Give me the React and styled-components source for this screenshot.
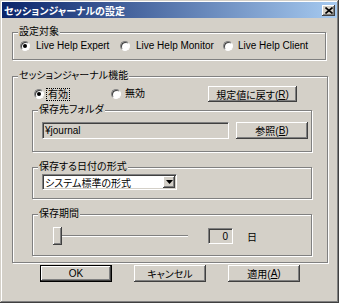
import styled, { createGlobalStyle } from "styled-components";

const FACE = "#d4d0c8";

const GlobalStyle = createGlobalStyle`
  html, body {
    margin: 0;
    padding: 0;
    background: ${FACE};
  }
  body {
    font-family: "Liberation Sans", "Noto Sans CJK JP", sans-serif;
    font-size: 10px;
    font-feature-settings: "palt";
    color: #000;
  }
`;

const Window = styled.div`
  width: 339px;
  height: 303px;
  box-sizing: border-box;
  padding: 2px;
  background: ${FACE};
  box-shadow: inset -1px -1px #404040, inset 1px 1px ${FACE},
    inset -2px -2px #808080, inset 2px 2px #fff;
  display: flex;
  flex-direction: column;
`;

const TitleBar = styled.div`
  height: 16px;
  flex: none;
  display: flex;
  align-items: center;
  justify-content: space-between;
  padding: 0 2px 0 2px;
  background: linear-gradient(to right, #0a246a, #a6caf0);
  color: #fff;
  font-weight: bold;
  font-size: 10px;
`;

const CloseButton = styled.div`
  width: 13px;
  height: 11px;
  box-sizing: border-box;
  background: ${FACE};
  display: flex;
  align-items: center;
  justify-content: center;
  box-shadow: inset -1px -1px #404040, inset 1px 1px #fff,
    inset -2px -2px #808080;
`;

const Body = styled.div`
  padding: 14px 0 0 10px;
  display: flex;
  flex-direction: column;
`;

/* etched group frame; the caption sits on the top line */
const Group = styled.div`
  margin-top: ${(p) => p.$mt || 0}px;
  padding-bottom: ${(p) => p.$pb || 0}px;
  width: ${(p) => p.$w}px;
  box-sizing: border-box;
  border: 1px solid #808080;
  box-shadow: inset 1px 1px #fff, 1px 1px #fff;
  display: flex;
  flex-direction: column;
`;

const Caption = styled.div`
  align-self: flex-start;
  margin: -7px 0 ${(p) => p.$gap || 0}px 5px;
  padding: 0 1px;
  height: 12px;
  line-height: 12px;
  background: ${FACE};
  white-space: nowrap;
`;

const GroupContent = styled.div`
  padding-left: ${(p) => p.$pl || 0}px;
  display: flex;
  flex-direction: column;
`;

const RadioRow = styled.div`
  display: grid;
  grid-template-columns: ${(p) => p.$cols};
  align-items: center;
  height: ${(p) => p.$h || 12}px;
  padding-left: ${(p) => p.$pl || 0}px;
`;

const RadioItem = styled.label`
  display: flex;
  align-items: center;
  gap: ${(p) => p.$gap || 6}px;
  white-space: nowrap;
  line-height: 12px;
`;

const RadioCircle = styled.span`
  flex: none;
  width: 10px;
  height: 10px;
  box-sizing: border-box;
  border-radius: 50%;
  background: #fff;
  border: 1px solid;
  border-color: #808080 #fff #fff #808080;
  box-shadow: inset 1px 1px #404040;
  display: flex;
  align-items: center;
  justify-content: center;
  &::after {
    content: "";
    width: 4px;
    height: 4px;
    border-radius: 50%;
    background: ${(p) => (p.$on ? "#000" : "transparent")};
  }
`;

const Focus = styled.span`
  outline: 1px dotted #000;
  padding: 0 1px;
  line-height: 11px;
`;

const Button = styled.div`
  width: ${(p) => p.$w}px;
  height: ${(p) => p.$h || 17}px;
  box-sizing: border-box;
  display: flex;
  align-items: center;
  justify-content: center;
  white-space: nowrap;
  background: ${FACE};
  border: ${(p) => (p.$default ? "1px solid #000" : "none")};
  box-shadow: inset -1px -1px #404040, inset 1px 1px #fff,
    inset -2px -2px #808080, inset 2px 2px ${FACE};
`;

const FieldRow = styled.div`
  display: flex;
  align-items: center;
  gap: ${(p) => p.$gap || 0}px;
  margin-left: ${(p) => p.$ml || 0}px;
`;

const TextBox = styled.div`
  width: ${(p) => p.$w}px;
  height: ${(p) => p.$h}px;
  box-sizing: border-box;
  display: flex;
  align-items: center;
  justify-content: ${(p) => (p.$right ? "flex-end" : "flex-start")};
  padding: 0 ${(p) => (p.$right ? 4 : 0)}px 0 ${(p) => (p.$right ? 0 : 2)}px;
  background: ${(p) => p.$bg || FACE};
  border: 1px solid;
  border-color: #808080 #fff #fff #808080;
  box-shadow: inset 1px 1px #404040, inset -1px -1px ${FACE};
  white-space: nowrap;
`;

const Combo = styled(TextBox)`
  justify-content: space-between;
  padding: 0 1px 0 2px;
`;

const DropButton = styled.div`
  width: 12px;
  height: 12px;
  box-sizing: border-box;
  background: ${FACE};
  display: flex;
  align-items: center;
  justify-content: center;
  box-shadow: inset -1px -1px #404040, inset 1px 1px #fff,
    inset -2px -2px #808080;
`;

const SliderRow = styled.div`
  display: flex;
  align-items: center;
  height: 18px;
  padding-left: 20px;
`;

const Thumb = styled.div`
  width: 9px;
  height: 18px;
  flex: none;
  box-sizing: border-box;
  background: ${FACE};
  box-shadow: inset -1px -1px #404040, inset 1px 1px #fff,
    inset -2px -2px #808080;
`;

const Track = styled.div`
  width: 126px;
  height: 2px;
  box-sizing: border-box;
  border-top: 1px solid #808080;
  border-bottom: 1px solid #fff;
`;

const Unit = styled.span`
  margin-left: 14px;
`;

const ButtonBar = styled.div`
  display: flex;
  gap: 22px;
  margin-top: 2px;
  padding-left: 28px;
`;

export default function App() {
  return (
    <>
      <GlobalStyle />
      <Window>
        <TitleBar>
          <span>セッションジャーナルの設定</span>
          <CloseButton>
            <svg width="8" height="7" viewBox="0 0 8 7">
              <path d="M0.5 0.5 L7.5 6.5 M7.5 0.5 L0.5 6.5" stroke="#000" strokeWidth="1.6" />
            </svg>
          </CloseButton>
        </TitleBar>
        <Body>
          <Group $w={314} $pb={7}>
            <Caption $gap={2}>設定対象</Caption>
            <GroupContent $pl={7}>
              <RadioRow $cols="100px 103px auto">
                <RadioItem>
                  <RadioCircle $on />
                  Live Help Expert
                </RadioItem>
                <RadioItem>
                  <RadioCircle />
                  Live Help Monitor
                </RadioItem>
                <RadioItem $gap={5}>
                  <RadioCircle />
                  Live Help Client
                </RadioItem>
              </RadioRow>
            </GroupContent>
          </Group>

          <Group $w={316} $mt={16} $pb={6}>
            <Caption $gap={4}>セッションジャーナル機能</Caption>
            <GroupContent $pl={19}>
              <RadioRow $cols="77px 97px 89px" $h={16} $pl={2}>
                <RadioItem $gap={3}>
                  <RadioCircle $on />
                  <Focus>有効</Focus>
                </RadioItem>
                <RadioItem $gap={4}>
                  <RadioCircle />
                  無効
                </RadioItem>
                <Button $w={89} $h={16}>
                  規定値に戻す(<u>R</u>)
                </Button>
              </RadioRow>

              <Group $w={280} $mt={8} $pb={12}>
                <Caption $gap={6}>保存先フォルダ</Caption>
                <GroupContent $pl={9}>
                  <FieldRow $gap={7}>
                    <TextBox $w={187} $h={17}>¥journal</TextBox>
                    <Button $w={72}>
                      参照(<u>B</u>)
                    </Button>
                  </FieldRow>
                </GroupContent>
              </Group>

              <Group $w={280} $mt={15} $pb={8}>
                <Caption $gap={1}>保存する日付の形式</Caption>
                <GroupContent $pl={9}>
                  <Combo $w={135} $h={16} $bg="#fff">
                    <span>システム標準の形式</span>
                    <DropButton>
                      <svg width="7" height="4" viewBox="0 0 7 4">
                        <path d="M0 0 H7 L3.5 4 Z" fill="#000" />
                      </svg>
                    </DropButton>
                  </Combo>
                </GroupContent>
              </Group>

              <Group $w={280} $mt={15} $pb={10}>
                <Caption $gap={7}>保存期間</Caption>
                <SliderRow>
                  <Thumb />
                  <Track />
                  <FieldRow $ml={20}>
                    <TextBox $w={25} $h={16} $right>
                      0
                    </TextBox>
                    <Unit>日</Unit>
                  </FieldRow>
                </SliderRow>
              </Group>
            </GroupContent>
          </Group>

          <ButtonBar>
            <Button $w={72} $default>
              OK
            </Button>
            <Button $w={72}>キャンセル</Button>
            <Button $w={72}>
              適用(<u>A</u>)
            </Button>
          </ButtonBar>
        </Body>
      </Window>
    </>
  );
}
